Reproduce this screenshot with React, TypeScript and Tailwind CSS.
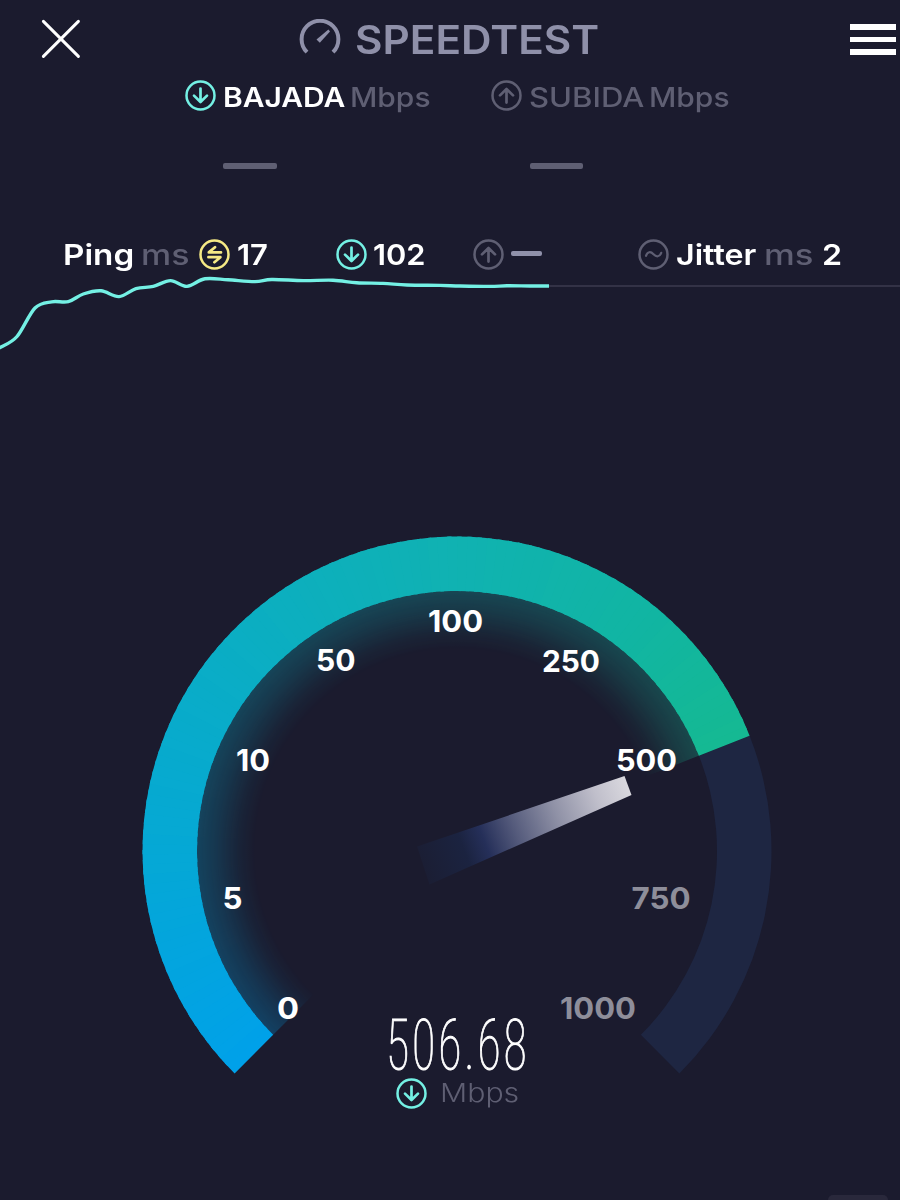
import { useLayoutEffect, useRef, useState } from "react";
import type { ReactNode } from "react";

/* Text stretched horizontally so that it fills the width of its box. */
function Fit({ className, children }: { className: string; children: ReactNode }) {
  const box = useRef<HTMLSpanElement>(null);
  const ink = useRef<HTMLSpanElement>(null);
  const [scale, setScale] = useState(1);
  useLayoutEffect(() => {
    if (box.current && ink.current) {
      setScale(box.current.clientWidth / ink.current.offsetWidth);
    }
  }, []);
  return (
    <span ref={box} className={`block shrink-0 ${className}`}>
      <span
        ref={ink}
        className="inline-block origin-left whitespace-nowrap"
        style={{ transform: `scaleX(${scale})` }}
      >
        {children}
      </span>
    </span>
  );
}

type IconKind = "down" | "up" | "ping" | "jitter";

const ICON_PATHS: Record<IconKind, string> = {
  down: "M15.5 8.6V21.8M9 15.6L15.5 22L22 15.6",
  up: "M15.5 22.6V9.2M9 15.4L15.5 9L22 15.4",
  ping: "M22 13.4H9.8L16 8.2M9.4 18.2H21.4L15.4 23.2",
  jitter: "M8 16.8C9.6 12.4 12.6 12.2 15.5 15.2S21.6 18.2 23.2 13.8",
};

function CircleIcon({ kind, className }: { kind: IconKind; className: string }) {
  return (
    <svg viewBox="0 0 31 31" className={`h-[31px] w-[31px] shrink-0 ${className}`} fill="none" stroke="currentColor">
      <circle cx="15.5" cy="15.5" r="14" strokeWidth="2.5" />
      <path d={ICON_PATHS[kind]} strokeWidth={kind === "jitter" ? 2.2 : 2.7} strokeLinecap="round" strokeLinejoin="round" />
    </svg>
  );
}

const SAMPLES: [number, number][] = [
  [-2, 348], [1, 347], [17, 336.5], [35, 308], [51.7, 301.8], [68.3, 301.6], [83.3, 294], [101, 290.8],
  [119, 296.6], [136, 288.6], [153.3, 286.4], [170.5, 280.6], [187, 286.4], [205, 278.8], [228, 279.8],
  [255, 281.6], [271.7, 279.5], [303.3, 280.6], [333, 280.2], [356.7, 282.8], [383, 283.4], [407, 285],
  [440, 285.4], [460, 286], [490, 286.4], [507, 285.8], [530, 286], [549, 286],
];

function smooth(points: [number, number][]) {
  let d = `M${points[0][0]} ${points[0][1]}`;
  for (let i = 0; i < points.length - 1; i++) {
    const a = points[Math.max(i - 1, 0)];
    const b = points[i];
    const c = points[i + 1];
    const e = points[Math.min(i + 2, points.length - 1)];
    d += `C${b[0] + (c[0] - a[0]) / 6} ${b[1] + (c[1] - a[1]) / 6} ${c[0] - (e[0] - b[0]) / 6} ${c[1] - (e[1] - b[1]) / 6} ${c[0]} ${c[1]}`;
  }
  return d;
}

const CX = 457;
const CY = 851;
const START = 225;
const END = 21.5;

function ring(from: number, to: number, outer: number, inner: number) {
  const p = (deg: number, r: number) => {
    const t = (deg * Math.PI) / 180;
    return `${(CX + r * Math.cos(t)).toFixed(2)} ${(CY - r * Math.sin(t)).toFixed(2)}`;
  };
  const large = from - to > 180 ? 1 : 0;
  return `M${p(from, outer)}A${outer} ${outer} 0 ${large} 1 ${p(to, outer)}L${p(to, inner)}A${inner} ${inner} 0 ${large} 0 ${p(from, inner)}Z`;
}

const STOPS: [number, number[]][] = [
  [0, [0, 161, 233]],
  [0.22, [5, 168, 213]],
  [0.45, [11, 174, 194]],
  [0.66, [16, 178, 178]],
  [0.85, [17, 181, 163]],
  [1, [21, 185, 146]],
];

function arcColor(t: number) {
  let i = 0;
  while (i < STOPS.length - 2 && t > STOPS[i + 1][0]) i++;
  const [t0, a] = STOPS[i];
  const [t1, b] = STOPS[i + 1];
  const k = (t - t0) / (t1 - t0);
  return `rgb(${a.map((v, n) => Math.round(v + (b[n] - v) * k)).join(",")})`;
}

const STEPS = 110;
const SLICES = Array.from({ length: STEPS }, (_, i) => {
  const span = START - END;
  return {
    from: START - (span * i) / STEPS + (i === 0 ? 1 : 0),
    to: START - (span * (i + 1)) / STEPS - 0.8,
    color: arcColor((i + 0.5) / STEPS),
  };
});

const LABELS: { text: string; x: number; y: number; w: number; dim?: boolean }[] = [
  { text: "0", x: 277, y: 1018.5, w: 22 },
  { text: "5", x: 222.5, y: 908.5, w: 20 },
  { text: "10", x: 236, y: 771, w: 34 },
  { text: "50", x: 316, y: 670.5, w: 39.5 },
  { text: "100", x: 428, y: 632, w: 55 },
  { text: "250", x: 542, y: 672, w: 58 },
  { text: "500", x: 616, y: 771, w: 61 },
  { text: "750", x: 631.5, y: 908.5, w: 59, dim: true },
  { text: "1000", x: 560, y: 1018.5, w: 76, dim: true },
];

function Gauge() {
  return (
    <svg viewBox="130 520 660 570" className="ml-[130px] block h-[570px] w-[660px]">
      <defs>
        <radialGradient id="fade" gradientUnits="userSpaceOnUse" cx={CX} cy={CY} r="262">
          <stop offset="0.77" stopColor="#fff" stopOpacity="0" />
          <stop offset="0.83" stopColor="#fff" stopOpacity="0.06" />
          <stop offset="0.92" stopColor="#fff" stopOpacity="0.2" />
          <stop offset="1" stopColor="#fff" stopOpacity="0.3" />
        </radialGradient>
        <mask id="glow" maskUnits="userSpaceOnUse" x="130" y="520" width="660" height="570">
          <rect x="130" y="520" width="660" height="570" fill="url(#fade)" />
        </mask>
        <clipPath id="band">
          <path d={ring(START, END, 314.5, 260)} />
        </clipPath>
        <clipPath id="halo">
          <path d={ring(START, END, 261, 190)} />
        </clipPath>
        <linearGradient id="needle" gradientUnits="userSpaceOnUse" x1="423" y1="865" x2="627.5" y2="785.5">
          <stop offset="0" stopColor="#1b1e34" />
          <stop offset="0.2" stopColor="#1b2340" />
          <stop offset="0.3" stopColor="#252f59" />
          <stop offset="0.45" stopColor="#555b7c" />
          <stop offset="0.65" stopColor="#8f91a6" />
          <stop offset="0.85" stopColor="#c0bfcb" />
          <stop offset="1" stopColor="#d9d8de" />
        </linearGradient>
      </defs>
      <path d={ring(END, -45, 314.5, 260)} fill="#1e2642" />
      <g mask="url(#glow)">
        <g clipPath="url(#halo)">
          {SLICES.map((s, i) => (
            <path key={i} d={ring(s.from, s.to, 264, 186)} fill={s.color} />
          ))}
        </g>
      </g>
      <g clipPath="url(#band)">
        {SLICES.map((s, i) => (
          <path key={i} d={ring(s.from, s.to, 320, 254)} fill={s.color} />
        ))}
      </g>
      <path d="M417 846.5L624.5 776L631.5 795L429.5 884.5Z" fill="url(#needle)" />
      {LABELS.map((l) => (
        <text
          key={l.text}
          x={l.x}
          y={l.y}
          textLength={l.w}
          lengthAdjust="spacingAndGlyphs"
          className="font-['Inter',sans-serif] text-[30px] font-bold"
          fill={l.dim ? "#8e8e9a" : "#ffffff"}
        >
          {l.text}
        </text>
      ))}
    </svg>
  );
}

export default function App() {
  return (
    <main className="flex h-[1200px] w-[900px] flex-col overflow-hidden bg-[#1b1b2e] font-['Inter',sans-serif] text-white">
      <header className="flex h-[79px] items-center">
        <svg viewBox="0 0 40 40" className="ml-[41px] mt-[-1px] h-10 w-10" stroke="#fff" strokeWidth="3" strokeLinecap="round">
          <path d="M2.4 2.4L37.4 37.4M37.4 2.4L2.4 37.4" />
        </svg>
        <svg viewBox="0 0 44 40" className="ml-[217px] mt-[-1px] h-10 w-11" fill="none" stroke="#8f90a9">
          <path d="M9 33.2A18.4 18.4 0 1 1 35 33.2" strokeWidth="4" />
          <path d="M18.5 20.4L30.4 10.5L32 12.4L21.8 23.8Z" fill="#8f90a9" stroke="none" />
        </svg>
        <Fit className="ml-[13px] w-[244px] text-[39px] font-semibold leading-[79px] text-[#8f90a9]">SPEEDTEST</Fit>
        <div className="ml-[251px] flex flex-col gap-[7px]">
          <span className="block h-[5.5px] w-[46px] bg-white" />
          <span className="block h-[5.5px] w-[46px] bg-white" />
          <span className="block h-[5.5px] w-[46px] bg-white" />
        </div>
      </header>

      <section className="flex h-9 items-center text-[27px] leading-[38px] text-[#5f5f73]">
        <CircleIcon kind="down" className="mt-[-3px] ml-[185px] text-[#74f0e4]" />
        <Fit className="ml-[7px] mt-px w-[122px] font-semibold text-white">BAJADA</Fit>
        <Fit className="ml-[5px] mt-px w-[81px] font-medium">Mbps</Fit>
        <CircleIcon kind="up" className="mt-[-3px] ml-[60px]" />
        <Fit className="ml-[7px] mt-px w-[115px] font-medium">SUBIDA</Fit>
        <Fit className="ml-[5px] mt-px w-[81px] font-medium">Mbps</Fit>
      </section>

      <section className="mt-[48px] flex h-[6px] gap-[253px] pl-[223px]">
        <span className="h-[6px] w-[54px] rounded-[2px] bg-[#5f5f73]" />
        <span className="h-[6px] w-[53px] rounded-[2px] bg-[#5f5f73]" />
      </section>

      <section className="mt-[66px] flex h-10 items-center text-[29px] font-semibold leading-10">
        <Fit className="ml-[63px] w-[71px]">Ping</Fit>
        <Fit className="ml-[7px] w-[48px] font-medium text-[#5f5f73]">ms</Fit>
        <CircleIcon kind="ping" className="ml-[10px] mt-[-1px] text-[#f6ea85]" />
        <Fit className="ml-[7px] w-[31px]">17</Fit>
        <CircleIcon kind="down" className="ml-[68px] mt-[-1px] text-[#74f0e4]" />
        <Fit className="ml-[6px] w-[52px]">102</Fit>
        <CircleIcon kind="up" className="ml-[48px] mt-[-1px] text-[#5f5f73]" />
        <span className="ml-[7px] mt-[-4px] h-[5px] w-[31px] rounded-[2px] bg-[#9091aa]" />
        <CircleIcon kind="jitter" className="ml-[96px] mt-[-1px] text-[#5f5f73]" />
        <Fit className="ml-[7px] w-[80px]">Jitter</Fit>
        <Fit className="ml-[8px] w-[49px] font-medium text-[#5f5f73]">ms</Fit>
        <Fit className="ml-[9px] w-[20px]">2</Fit>
      </section>

      <svg viewBox="0 275 900 85" className="block h-[85px] w-[900px] shrink-0" fill="none">
        <path d="M549 286H900" stroke="#3c3b4f" strokeWidth="1.6" />
        <path d={smooth(SAMPLES)} stroke="#74f0e4" strokeWidth="3.4" />
      </svg>

      <section className="mt-[160px] h-[498px] shrink-0">
        <Gauge />
      </section>

      <section className="relative flex h-[54px] shrink-0 items-center pl-[386px]">
        <Fit className="w-[144px] font-['Roboto',sans-serif] text-[71px] font-thin leading-[54px] tracking-[0.06em] [font-stretch:75%] [-webkit-text-stroke:1px_white]">506.68</Fit>
      </section>
      <section className="relative mt-[3px] flex h-9 shrink-0 items-center text-[26px] font-light leading-9 text-[#5f5f73]">
        <CircleIcon kind="down" className="ml-[396px] text-[#74f0e4]" />
        <Fit className="ml-[13px] w-[79px]">Mbps</Fit>
      </section>
      <footer className="mt-auto flex justify-end pr-3">
        <span className="h-[5px] w-[60px] rounded-t-[8px] bg-[#29283b]" />
      </footer>
    </main>
  );
}
